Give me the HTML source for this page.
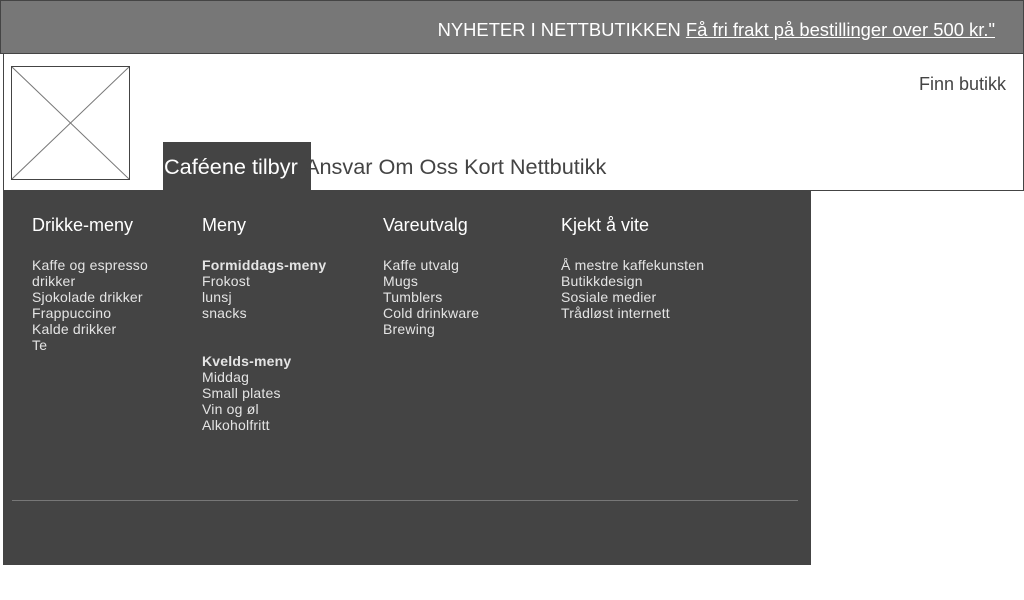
<!DOCTYPE html><html><head><meta charset="utf-8"><style>
body{margin:0;width:1024px;height:600px;position:relative;background:#fff;font-family:"Liberation Sans",sans-serif;overflow:hidden}
.a{position:absolute;white-space:nowrap}
.top{left:0;top:0;width:1022px;height:52px;background:#777;border:1px solid #444}
.hdr{left:3px;top:54px;width:1019px;height:136px;border:1px solid #444;border-top:none}
.logo{left:11px;top:66px;width:117px;height:112px;border:1px solid #444}
.panel{left:3px;top:190px;width:808px;height:375px;background:#444}
h3{position:absolute;margin:0;font-weight:normal;font-size:18px;color:#fff;top:215px}
.l{position:absolute;top:257px;font-size:14px;line-height:16px;color:#e4e4e4;letter-spacing:.2px}
</style></head><body>
<div class="a top"></div>
<div class="a" style="right:29px;top:19px;font-size:18.4px;color:#fff">NYHETER I NETTBUTIKKEN <u>Få fri frakt på bestillinger over 500 kr."</u></div>
<div class="a hdr"></div>
<div class="a logo"><svg width="117" height="112" style="display:block"><line x1="0" y1="0" x2="117" y2="112" stroke="#777"/><line x1="117" y1="0" x2="0" y2="112" stroke="#777"/></svg></div>
<div class="a" style="right:18px;top:74px;font-size:18px;color:#444">Finn butikk</div>
<div class="a" style="left:163px;top:142px;width:148px;height:48px;background:#444"></div>
<div class="a" style="left:164px;top:154px;font-size:21.7px;color:#fff">Caféene tilbyr</div>
<div class="a" style="left:305px;top:154px;font-size:21.7px;color:#444">Ansvar Om Oss Kort Nettbutikk</div>
<div class="a panel"></div>
<h3 style="left:32px">Drikke-meny</h3><h3 style="left:202px">Meny</h3><h3 style="left:383px">Vareutvalg</h3><h3 style="left:561px">Kjekt å vite</h3>
<div class="l" style="left:32px">Kaffe og espresso<br>drikker<br>Sjokolade drikker<br>Frappuccino<br>Kalde drikker<br>Te</div>
<div class="l" style="left:202px"><b>Formiddags-meny</b><br>Frokost<br>lunsj<br>snacks<br><br><br><b>Kvelds-meny</b><br>Middag<br>Small plates<br>Vin og øl<br>Alkoholfritt</div>
<div class="l" style="left:383px">Kaffe utvalg<br>Mugs<br>Tumblers<br>Cold drinkware<br>Brewing</div>
<div class="l" style="left:561px">Å mestre kaffekunsten<br>Butikkdesign<br>Sosiale medier<br>Trådløst internett</div>
<div class="a" style="left:12px;top:500px;width:786px;height:1px;background:#777"></div>
</body></html>
